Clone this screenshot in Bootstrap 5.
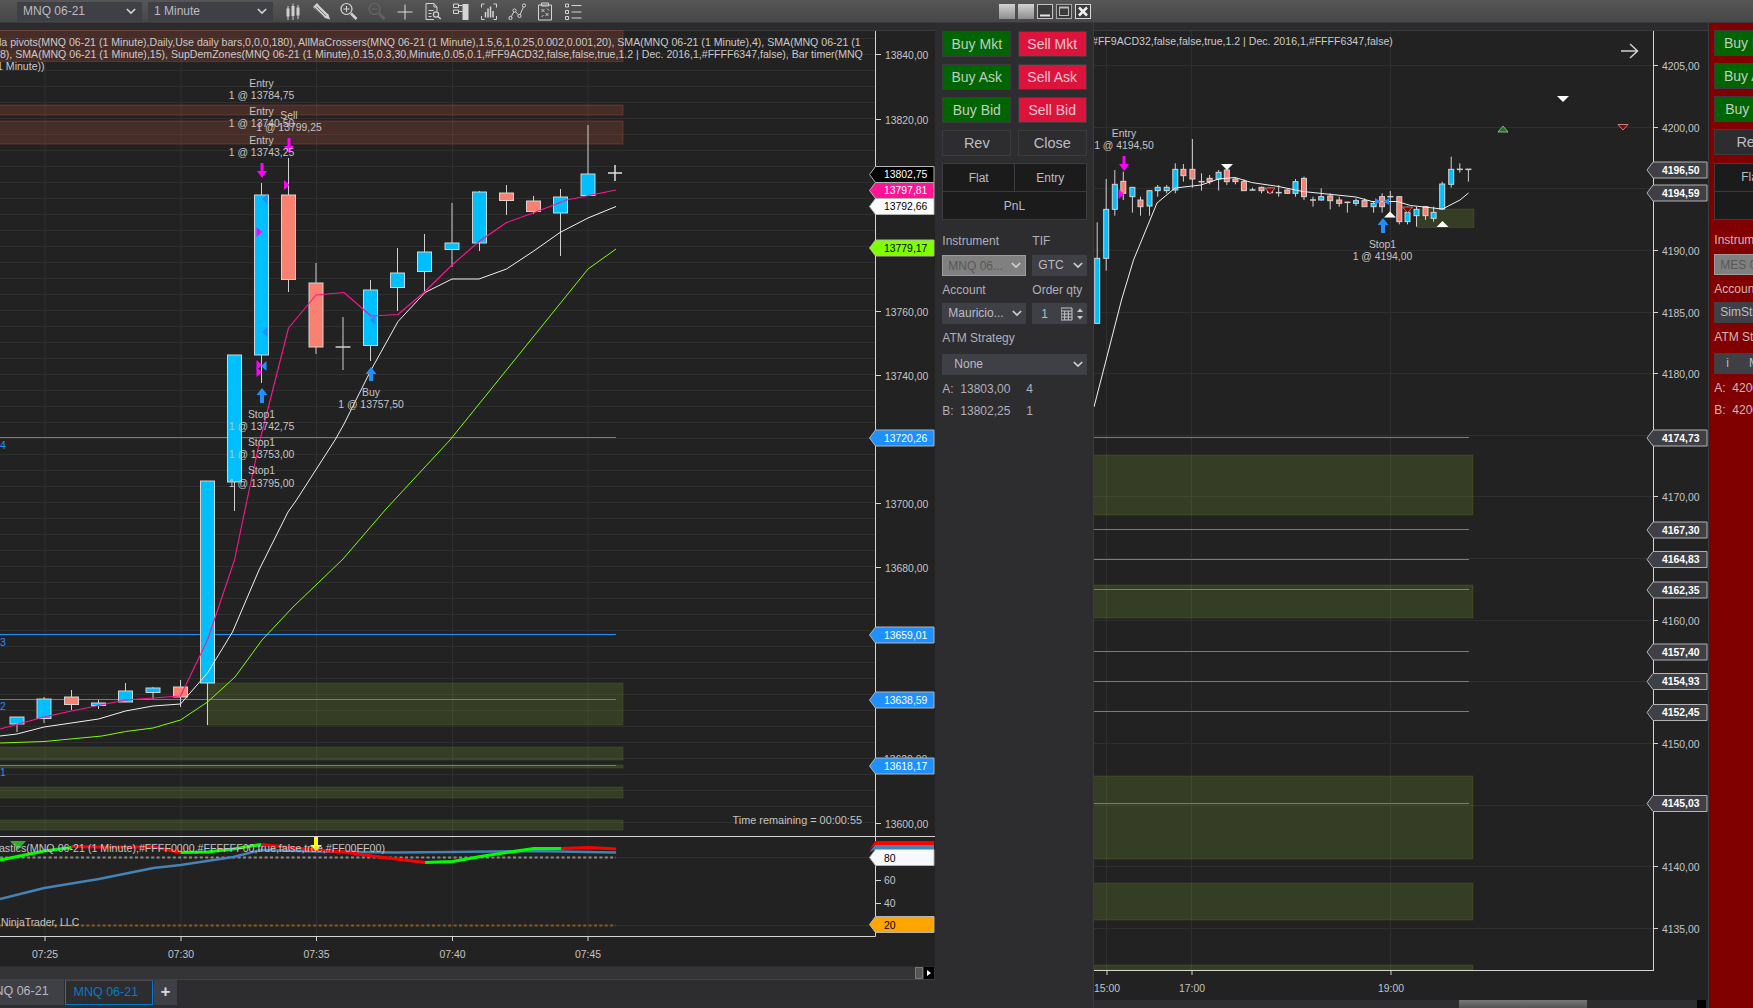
<!DOCTYPE html>
<html lang="en">
<head>
    <meta charset="UTF-8">
    <title>MNQ 06-21 chart</title>
    <link href="https://cdn.jsdelivr.net/npm/bootstrap@5.3.0/dist/css/bootstrap.min.css" rel="stylesheet">
    <style>
        html, body { height: 100%; }
        body {
            background: #2d2d30;
            color: #c0c0c6;
            font-family: "Liberation Sans", Arial, sans-serif;
            font-size: 12px;
            overflow: hidden;
        }
        /* top strip */
        .top-strip { height: 23px; flex: none; background: linear-gradient(#565656, #474747); border-bottom: 1px solid #3a3a3a; }
        .tb-left { width: 1093px; padding-left: 17px; }
        .tb-select.form-select {
            width: 124.5px; height: 19px; min-height: 0; margin-right: 6.5px; padding: 0 20px 0 6px;
            font-size: 12px; line-height: 19px; color: #bcbcc2; background-color: #3f3f46;
            border: 0; border-radius: 0;
            background-image: url("data:image/svg+xml,%3csvg xmlns='http://www.w3.org/2000/svg' viewBox='0 0 12 8'%3e%3cpath fill='none' stroke='%23d0d0d0' stroke-width='2' d='M1 1l5 5 5-5'/%3e%3c/svg%3e");
            background-size: 10px 7px; background-position: right 6px center;
        }
        .tb-icon { width: 28px; height: 22px; display: flex; align-items: center; justify-content: center; flex: none; }
        .tb-icons { margin-left: -.5px; }
        .win-btns { margin-left: auto; gap: 3px; padding-right: 2.5px; }
        .win-btn { width: 16px; height: 15px; display: block; }
        /* chart windows */
        .work-area { height: 985px; }
        .chart-one { width: 935px; flex: none; }
        .chart-two { width: 614px; flex: none; }
        .chart-one svg, .chart-two svg { display: block; }
        .cv text { font-family: "Liberation Sans", Arial, sans-serif; font-size: 10.4px; fill: #c4c4c4; dominant-baseline: central; }
        .cv .tag-t { fill: #fff; font-weight: 700; }
        .cv .legend-t { font-size: 10.58px; fill: #cacaca; }
        .cv .stoch-t { font-size: 10.68px; }
        .cv .remain-t { font-size: 10.9px; }
        .hscroll { background: #343436; border-top: 1px solid #2a2a2c; border-bottom: 1px solid #3f3f46; height: 14px; }
        .hscroll-thumb { width: 8px; height: 12px; background: #555; border: 1px solid #777; }
        .hscroll-end { width: 10px; height: 12px; background: #000; margin: 0 1px 0 1px; color: #fff; }
        .two-scroll { height: 8px; background: #2d2d30; position: relative; }
        .two-thumb { position: absolute; left: 365px; top: 0; width: 128px; height: 8px; background: linear-gradient(#777, #555); }
        .two-end { position: absolute; left: 603px; top: 0; width: 9px; height: 8px; background: #000; }
        /* tabs */
        .tab-row { height: 28px; border: 0; flex-wrap: nowrap; background: #2d2d30; }
        .tab-row .nav-link {
            height: 25px; padding: 0 7.5px; line-height: 23px; font-size: 12.5px; color: #b8b8be; background: #3f3f46;
            border: 0; border-radius: 0; margin: 0; white-space: nowrap;
        }
        .tab-row .tab-cut { margin-left: -24px; width: 88px; margin-right: 1px; padding-left: 8px; }
        .tab-row .nav-link.active { width: 88px; color: #0a78c8; background: #2d2d30; border: 1px solid #007acc; border-top-color: #4a4a50; margin-right: 1px; }
        .tab-row .tab-plus { width: 23px; text-align: center; padding: 0; font-weight: 700; font-size: 17px; color: #d8d8d8; }
        /* order panels */
        .order-wrap { width: 159px; flex: none; border-right: 1px solid #3c3c40; overflow: hidden; }
        .order-wrap.red-wrap { width: 45px; background: #800000; border-right: 0; border-left: 1px solid #3c3c40; }
        .order-panel { width: 158px; padding: 7.7px 6.3px 0 7.3px; }
        .red-wrap .order-panel { padding: 7px 6.3px 0 5.3px; }
        .red-wrap .fld-label, .red-wrap .quote-line { color: #d8b4b4; }
        .order-btns { --bs-gutter-x: 6.5px; --bs-gutter-y: 7px; }
        .order-btn.btn {
            width: 100%; height: 26px; padding: 0; font-size: 14px; line-height: 24px; border-radius: 0;
            color: #c0cec0; border: 1px solid #3c3c40; background: #2d2d30;
        }
        .order-btn.is-buy { background: #006400; }
        .order-btn.is-sell { background: #dc143c; color: #e8c6cc; }
        .order-btn.is-plain { color: #bcbcc2; font-size: 14.5px; }
        .pnl-table.table { width: 100%; table-layout: fixed; margin: 7.7px 0 0; --bs-table-bg: #1b1b1c; --bs-table-color: #bcbcc2; --bs-table-border-color: #3c3c40; }
        .pnl-table td { height: 28px; padding: 0; font-size: 12px; text-align: center; vertical-align: middle; }
        .fld-label { height: 14px; line-height: 14px; margin: 7px 0 6.5px; font-size: 12px; color: #b0b0b8; white-space: nowrap; overflow: visible; }
        .fld-first { margin-top: 13.7px; }
        .fld-atm { margin-bottom: 8.5px; }
        .fld-gap { gap: 6px; }
        .fld-side { width: 55px; flex: none; }
        .fld-main { width: 84px; flex: none; }
        .order-panel .form-select {
            height: 21px; min-height: 0; padding: 0 18px 0 6px; font-size: 12px; line-height: 21px; color: #bcbcc2; background-color: #3f3f46;
            border: 0; border-radius: 0;
            background-image: url("data:image/svg+xml,%3csvg xmlns='http://www.w3.org/2000/svg' viewBox='0 0 12 8'%3e%3cpath fill='none' stroke='%23d0d0d0' stroke-width='2' d='M1 1l5 5 5-5'/%3e%3c/svg%3e");
            background-size: 10px 7px; background-position: right 4px center;
        }
        .order-panel .form-select:disabled { background-color: #808080; color: #585858; border: 1px solid #9c9c9c; padding-left: 5px; opacity: 1; }
        .sel-wide.form-select { padding-left: 12px; }
        .qty-box { height: 21px; background: #3f3f46; padding-left: 9px; color: #bcbcc2; }
        .quote-line { height: 14px; line-height: 14px; margin-top: 8px; color: #b0b0b8; font-size: 12px; }
        .quote-first { margin-top: 7px; }
        .q-key { width: 18px; flex: none; }
        .q-px { width: 66px; flex: none; }
    </style>
</head>
<body class="d-flex flex-column">

<!-- window title strip with instrument, interval and chart tools -->
<div class="top-strip d-flex">
    <div class="tb-left d-flex align-items-center">
        <select class="form-select tb-select"><option>MNQ 06-21</option></select>
        <select class="form-select tb-select"><option>1 Minute</option></select>
        <div class="tb-icons d-flex">
            <div class="tb-icon"><svg width="20" height="20" viewBox="0 0 20 20"><path d="M5 5v14M10 2.500v16.500M15 4v14" stroke="#cfcfcf" fill="none"/><path d="M3.500 7.500h3v8h-3zM8.500 5h3v10h-3zM13.500 6.500h3v8h-3z" fill="#cfcfcf"/></svg></div>
            <div class="tb-icon"><svg width="20" height="20" viewBox="0 0 20 20"><path d="M2 6l4-4 11.500 11.500 1.500 5-5-1.500z" fill="#d0d0d0"/><path d="M5.500 5.500l9.500 9.500M7.500 3.500l9 9M3.500 6.500l9 9" stroke="#555" stroke-width=".8" fill="none"/></svg></div>
            <div class="tb-icon"><svg width="20" height="20" viewBox="0 0 20 20"><circle cx="7.500" cy="8" r="5.500" fill="none" stroke="#d8d8d8" stroke-width="1.200"/><path d="M7.500 5v6M4.500 8h6" stroke="#d8d8d8" fill="none"/><path d="M12 12.500l5.500 5.500" stroke="#cfcfcf" stroke-width="2.600"/></svg></div>
            <div class="tb-icon"><svg width="20" height="20" viewBox="0 0 20 20"><circle cx="7.500" cy="8" r="5.500" fill="none" stroke="#6a6a6a" stroke-width="1.200"/><path d="M4.500 8h6" stroke="#6a6a6a" fill="none"/><path d="M12 12.500l5.500 5.500" stroke="#636363" stroke-width="2.600"/></svg></div>
            <div class="tb-icon"><svg width="20" height="20" viewBox="0 0 20 20"><path d="M2.500 11h15M10 3.500v15" stroke="#dcdcdc" fill="none"/></svg></div>
            <div class="tb-icon"><svg width="20" height="20" viewBox="0 0 20 20"><path d="M3 18.500V2.500h8l3 3.500v4M3 18.500h8M11 2.500v3.500h3M5.500 9.500h5M5.500 12.500h3M5.500 15.500h3" stroke="#d4d4d4" fill="none"/><circle cx="13" cy="13.500" r="2.600" fill="none" stroke="#d4d4d4" stroke-width="1.200"/><path d="M14.800 15.500l3 2.500" stroke="#d4d4d4" stroke-width="1.600"/></svg></div>
            <div class="tb-icon"><svg width="20" height="20" viewBox="0 0 20 20"><path d="M11.500 3h6v16h-6z" fill="#d4d4d4"/><path d="M2.500 3h5v3.500h-5zM2.500 9h5v3.500h-5zM7.500 4.500h4M7.500 10.500h4" stroke="#d4d4d4" fill="none"/></svg></div>
            <div class="tb-icon"><svg width="20" height="20" viewBox="0 0 20 20"><path d="M5.500 3h-3v3.500M14.500 3h3v3.500M5.500 18.500h-3v-3.500M14.500 18.500h3v-3.500" stroke="#d4d4d4" fill="none"/><path d="M6.500 11v5.500M9 7.500v9M11.500 5.500v11M14 10v6.500" stroke="#d4d4d4" stroke-width="1.500" fill="none"/></svg></div>
            <div class="tb-icon"><svg width="20" height="20" viewBox="0 0 20 20"><path d="M3.500 17L7.500 9.500l5 5.500 4.500-10.500" stroke="#d4d4d4" fill="none"/><circle cx="3.500" cy="17" r="1.600" fill="#4c4c4c" stroke="#d4d4d4"/><circle cx="7.500" cy="9.500" r="1.600" fill="#4c4c4c" stroke="#d4d4d4"/><circle cx="12.500" cy="15" r="1.600" fill="#4c4c4c" stroke="#d4d4d4"/><circle cx="17" cy="4.500" r="1.600" fill="#4c4c4c" stroke="#d4d4d4"/></svg></div>
            <div class="tb-icon"><svg width="20" height="20" viewBox="0 0 20 20"><path d="M3.500 4h13v15h-13zM6.500 2h7v3h-7z" stroke="#d4d4d4" fill="none"/><path d="M6.500 8l3 3M9.500 8l-3 3M10.500 12l3 3M13.500 12l-3 3M12 7.500l2 2M6.500 16l2-2" stroke="#d4d4d4" stroke-width=".9" fill="none"/></svg></div>
            <div class="tb-icon"><svg width="20" height="20" viewBox="0 0 20 20"><path d="M2.500 3h3v3h-3zM2.500 9.500h3v3h-3zM2.500 15.500h3v3h-3zM8.500 4.500h10M8.500 11h10M8.500 17h10" stroke="#d4d4d4" fill="none"/></svg></div>
        </div>
        <div class="win-btns d-flex">
            <svg class="win-btn" viewBox="0 0 16 15"><defs><linearGradient id="wg" x1="0" y1="0" x2="0" y2="1"><stop offset="0" stop-color="#d2d2d2"/><stop offset="1" stop-color="#8e8e8e"/></linearGradient></defs><rect width="16" height="15" fill="url(#wg)"/></svg>
            <svg class="win-btn" viewBox="0 0 16 15"><rect width="16" height="15" fill="url(#wg)"/></svg>
            <svg class="win-btn" viewBox="0 0 16 15"><rect x=".5" y=".5" width="15" height="14" fill="#3b3b3b" stroke="#c4c4c4"/><path d="M3 11.500h10" stroke="#e4e4e4" stroke-width="2"/></svg>
            <svg class="win-btn" viewBox="0 0 16 15"><rect x=".5" y=".5" width="15" height="14" fill="#3b3b3b" stroke="#a8a8a8"/><rect x="3.500" y="3.500" width="9" height="8" fill="none" stroke="#bcbcbc"/><path d="M3 3.500h10" stroke="#bcbcbc" stroke-width="2"/></svg>
            <svg class="win-btn" viewBox="0 0 16 15"><rect x=".5" y=".5" width="15" height="14" fill="#3b3b3b" stroke="#d8d8d8"/><path d="M4 3.500l8 8M12 3.500l-8 8" stroke="#eee" stroke-width="2.600"/></svg>
        </div>
    </div>
</div>

<div class="work-area d-flex">
    <!-- left chart: MNQ price pane, stochastics pane, time axis -->
    <section class="chart-one d-flex flex-column">
        <svg id="chartOne" class="cv" width="935" height="943" viewBox="0 23 935 943"></svg>
        <div class="hscroll d-flex justify-content-end align-items-start">
            <div class="hscroll-thumb"></div>
            <div class="hscroll-end d-flex align-items-center justify-content-center"><svg width="4" height="6" viewBox="0 0 4 6"><path d="M0 0l4 3-4 3z" fill="#fff"/></svg></div>
        </div>
        <ul class="nav nav-tabs tab-row">
            <li class="nav-item"><a class="nav-link tab-cut" href="#">MNQ 06-21</a></li>
            <li class="nav-item"><a class="nav-link active" href="#">MNQ 06-21</a></li>
            <li class="nav-item"><a class="nav-link tab-plus" href="#">+</a></li>
        </ul>
    </section>

    <aside class="order-wrap" id="panelOne"></aside>

    <!-- right chart: MES -->
    <section class="chart-two d-flex flex-column">
        <svg id="chartTwo" class="cv" width="614" height="977" viewBox="1094 23 614 977"></svg>
        <div class="two-scroll"><div class="two-thumb"></div><div class="two-end"></div></div>
    </section>

    <aside class="order-wrap red-wrap" id="panelTwo"></aside>
</div>

<script>
    // order entry panel, the red one is only the cut off left edge of a second copy
    function orderPanel(p) {
        return `<div class="order-panel">
            <div class="row row-cols-2 order-btns">
                <div class="col"><button class="btn order-btn is-buy">Buy Mkt</button></div>
                <div class="col"><button class="btn order-btn is-sell">Sell Mkt</button></div>
                <div class="col"><button class="btn order-btn is-buy">Buy Ask</button></div>
                <div class="col"><button class="btn order-btn is-sell">Sell Ask</button></div>
                <div class="col"><button class="btn order-btn is-buy">Buy Bid</button></div>
                <div class="col"><button class="btn order-btn is-sell">Sell Bid</button></div>
                <div class="col"><button class="btn order-btn is-plain">Rev</button></div>
                <div class="col"><button class="btn order-btn is-plain">Close</button></div>
            </div>
            <table class="table table-bordered pnl-table">
                <tr><td>Flat</td><td>Entry</td></tr>
                <tr><td colspan="2">PnL</td></tr>
            </table>
            <div class="d-flex fld-gap fld-first fld-label"><div class="fld-main">Instrument</div><div>TIF</div></div>
            <div class="d-flex fld-gap">
                <select class="form-select fld-main" disabled><option>${p.inst}</option></select>
                <select class="form-select fld-side"><option>GTC</option></select>
            </div>
            <div class="d-flex fld-gap fld-label"><div class="fld-main">Account</div><div>Order qty</div></div>
            <div class="d-flex fld-gap">
                <select class="form-select fld-main"><option>${p.acct}</option></select>
                <div class="qty-box fld-side d-flex align-items-center">
                    <span class="me-auto">1</span>
                    <svg width="26" height="16" viewBox="0 0 26 16"><path d="M0 2h11v12H0zM0 5h11M0 8h11M0 11h11M3.700 5v9M7.300 5v9" stroke="#c8c8c8" fill="none"/><path d="M16 6l3-3.500L22 6zM16 10l3 3.500 3-3.500z" fill="#c8c8c8"/></svg>
                </div>
            </div>
            <div class="fld-label fld-atm">ATM Strategy</div>
            <select class="form-select sel-wide"><option>${p.atm}</option></select>
            <div class="quote-line quote-first d-flex"><span class="q-key">A:</span><span class="q-px">${p.ask}</span><span>4</span></div>
            <div class="quote-line d-flex"><span class="q-key">B:</span><span class="q-px">${p.bid}</span><span>1</span></div>
        </div>`;
    }
    document.getElementById('panelOne').innerHTML = orderPanel({ inst: 'MNQ 06...', acct: 'Mauricio...', atm: 'None', ask: '13803,00', bid: '13802,25' });
    document.getElementById('panelTwo').innerHTML = orderPanel({ inst: 'MES 06...', acct: 'SimStudy...', atm: 'i&nbsp;&nbsp;&nbsp;&nbsp;&nbsp;&nbsp;Mauricio', ask: '4200,00', bid: '4200,00' });

    const BLUE = '#00bfff', SALMON = '#fa8072', MAGENTA = '#ff00ff', DODGER = '#1e90ff';

    const line = (x1, y1, x2, y2, c, w = 1) => `<line x1="${x1}" y1="${y1}" x2="${x2}" y2="${y2}" stroke="${c}" stroke-width="${w}"/>`;
    const dashed = (x1, y, x2, c) => `<line x1="${x1}" y1="${y}" x2="${x2}" y2="${y}" stroke="${c}" stroke-width="2" stroke-dasharray="3 2.400"/>`;
    const rect = (x, y, w, h, f, extra = '') => `<rect x="${x}" y="${y}" width="${w}" height="${h}" fill="${f}" ${extra}/>`;
    const txt = (x, y, s, anchor = 'start', extra = '') => `<text x="${x}" y="${y}" text-anchor="${anchor}" ${extra}>${s}</text>`;
    const poly = (pts, c, w) => `<polyline points="${pts.map(p => p.join(',')).join(' ')}" fill="none" stroke="${c}" stroke-width="${w}" stroke-linejoin="round"/>`;
    const tri = (pts, f, extra = '') => `<polygon points="${pts}" fill="${f}" ${extra}/>`;

    // candle: [x, wick top, body top, body bottom, wick bottom, colour], no colour means doji
    function candle(c, half) {
        const [x, wt, bt, bb, wb, col] = c;
        let s = line(x, wt, x, wb, '#cfcfcf');
        if (col) s += rect(x - half, bt, half * 2, bb - bt, col, 'stroke="#d4d4d4" stroke-width="1"');
        else s += line(x - half - .5, bt, x + half + .5, bt, '#cfcfcf', 1.5);
        return s;
    }

    // block arrows for the executions
    function downArrow(x, y1, y2, c) {
        return rect(x - 1.5, y1, 3, y2 - y1 - 6, c) + tri(`${x - 5},${y2 - 7} ${x + 5},${y2 - 7} ${x},${y2}`, c);
    }
    function upArrow(x, y1, y2, c) {
        return rect(x - 2, y1 + 6, 4, y2 - y1 - 6, c) + tri(`${x - 5.5},${y1 + 7} ${x + 5.5},${y1 + 7} ${x},${y1}`, c);
    }
    const rightTri = (x, y, c) => tri(`${x - 2.5},${y - 5} ${x + 3},${y} ${x - 2.5},${y + 5}`, c);
    const leftTri = (x, y, c) => tri(`${x + 2.5},${y - 5} ${x - 3},${y} ${x + 2.5},${y + 5}`, c);

    // price marker on the axis, pointing left
    function tag(x1, x2, y, fill, h = 8) {
        return tri(`${x1},${y} ${x1 + 6},${y - h} ${x2},${y - h} ${x2},${y + h} ${x1 + 6},${y + h}`, fill, 'stroke="#b4b4b4" stroke-width="1"');
    }

    function buildChartOne() {
        let s = rect(0, 23, 935, 943, '#222222') + rect(0, 23, 935, 7, '#2b2b2d') + line(0, 30.5, 935, 30.5, '#3a3a3c');

        // grid
        for (let y = 38; y < 836; y += 16) s += line(0, y + .5, 875, y + .5, '#2f2f2f');
        s += line(0, 857.5, 875, 857.5, '#2f2f2f') + line(0, 925.5, 875, 925.5, '#2f2f2f');
        [45, 181, 316.5, 452.5, 588].forEach(x => { s += line(x, 31, x, 936, '#2f2f2f'); });

        // zones
        const red = 'fill-opacity=".17" stroke="#ff6347" stroke-opacity=".22"';
        [[-2, 30.5, 625, 31], [-2, 105, 625, 10], [-2, 121, 625, 23]].forEach(z => { s += rect(z[0], z[1], z[2], z[3], '#ff6347', red); });
        const grn = 'fill-opacity=".16" stroke="#9acd32" stroke-opacity=".14"';
        [[207, 683, 416, 42], [-2, 747, 625, 13], [-2, 765, 625, 3], [-2, 787, 625, 11], [-2, 820, 625, 10]].forEach(z => { s += rect(z[0], z[1], z[2], z[3], '#9acd32', grn); });

        // pivots
        [437.5, 634.5, 699.5, 765.5].forEach(y => { s += line(0, y, 616, y, DODGER); });
        const pivotT = 'style="fill:#1e90ff"';
        s += txt(0, 445, '4', 'start', pivotT) + txt(0, 642, '3', 'start', pivotT) + txt(0, 706, '2', 'start', pivotT) + txt(0, 772, '1', 'start', pivotT);

        // candles
        const bars = [
            [17, 717, 717, 724, 732, BLUE], [44, 697, 699, 718.5, 723, BLUE], [71.5, 690, 697, 704.5, 710, SALMON],
            [98.5, 700, 703, 705.5, 709, BLUE], [125.5, 683, 691, 702, 702, BLUE], [153, 687, 688, 692.5, 699, BLUE],
            [180.5, 680, 687, 697, 707, SALMON], [207.5, 481, 481, 683, 725, BLUE], [234.5, 355, 355, 482, 511, BLUE],
            [261.5, 183, 195, 355, 383, BLUE], [288.5, 158, 195, 279.5, 292, SALMON], [316, 263, 283, 347, 354, SALMON],
            [343, 317, 347, 347, 370], [370.5, 280, 290, 345.5, 361, BLUE], [397.5, 248, 273, 287.5, 311, BLUE],
            [424.5, 234, 252, 271.5, 292, BLUE], [452, 203, 243, 249.5, 267, BLUE], [479.5, 191, 192, 243, 251, BLUE],
            [506.5, 185, 193, 200.5, 215, SALMON], [533.5, 196, 201, 211.5, 214, SALMON], [560.5, 189, 197, 213, 256, BLUE],
            [588, 125, 174, 195.5, 195.5, BLUE]
        ];
        bars.forEach(b => { s += candle(b, 7); });
        s += line(608, 173, 622, 173, '#e0e0e0', 1.5) + line(615, 165, 615, 181, '#e0e0e0', 1.5);

        // moving averages
        s += poly([[0, 743], [44, 741.5], [102, 736], [125.5, 731.5], [153, 728], [180.5, 720], [207.5, 702], [235, 677], [262, 640], [293, 607], [343, 559], [386, 509], [450, 440], [588, 269], [616, 249]], '#7fff00', 1);
        s += poly([[0, 736], [17, 734], [44, 727], [98.5, 719], [125.5, 711], [153, 706], [180.5, 704], [207.5, 673], [232.5, 632], [259, 570], [288, 512], [296.5, 500], [335, 440], [344, 424], [371, 370], [398, 321.5], [425, 292.5], [452, 279], [479, 279], [506.5, 269], [533, 251.5], [560, 232.5], [588, 218], [616, 206.5]], '#f0f0f0', 1);
        s += poly([[0, 729], [44, 717], [71.5, 711], [98.5, 705.5], [125.5, 700], [153, 698], [180.5, 696], [207.5, 640], [234.5, 560], [247, 500], [260, 440], [288.5, 328], [316, 295], [344, 292.5], [371, 316], [398, 314.5], [425, 291.5], [452, 265], [479, 241.5], [506.5, 222.5], [533, 213], [566.5, 200], [616, 190]], '#ff1493', 1.1);

        // executions
        s += downArrow(262, 163, 178, MAGENTA) + downArrow(289, 138, 153, MAGENTA);
        s += rightTri(259, 232, MAGENTA) + rightTri(286.5, 185, MAGENTA) + leftTri(265, 199, DODGER) + leftTri(265, 332, DODGER);
        s += rightTri(259, 365, MAGENTA) + rightTri(259, 372, MAGENTA) + leftTri(264, 366, DODGER) + leftTri(373, 320, DODGER);
        s += upArrow(262, 388, 403, DODGER) + upArrow(371, 367, 381, DODGER);

        const labels = [
            [261.5, 83, 'Entry'], [261.5, 95.5, '1 @ 13784,75'], [261.5, 111, 'Entry'], [261.5, 123.5, '1 @ 13740,50'],
            [261.5, 140, 'Entry'], [261.5, 152, '1 @ 13743,25'], [289, 115, 'Sell'], [289, 127, '1 @ 13799,25'],
            [261.5, 414, 'Stop1'], [261.5, 426, '1 @ 13742,75'], [261.5, 442, 'Stop1'], [261.5, 454, '1 @ 13753,00'],
            [261.5, 470, 'Stop1'], [261.5, 483, '1 @ 13795,00'], [371, 392, 'Buy'], [371, 404, '1 @ 13757,50']
        ];
        labels.forEach(l => { s += txt(l[0], l[1], l[2], 'middle'); });

        // legend
        s += txt(-1, 42, 'la pivots(MNQ 06-21 (1 Minute),Daily,Use daily bars,0,0,0,180), AllMaCrossers(MNQ 06-21 (1 Minute),1.5,6,1,0.25,0.002,0.001,20), SMA(MNQ 06-21 (1 Minute),4), SMA(MNQ 06-21 (1', 'start', 'class="legend-t"');
        s += txt(-3, 54, ',8), SMA(MNQ 06-21 (1 Minute),15), SupDemZones(MNQ 06-21 (1 Minute),0.15,0.3,30,Minute,0.05,0.1,#FF9ACD32,false,false,true,1.2 | Dec. 2016,1,#FFFF6347,false), Bar timer(MNQ', 'start', 'class="legend-t"');
        s += txt(-3, 66, '1 Minute))', 'start', 'class="legend-t"');
        s += txt(862, 820, 'Time remaining = 00:00:55', 'end', 'class="remain-t"');

        // stochastics pane
        s += dashed(0, 857.5, 616, '#8c8c8c') + dashed(0, 925.5, 616, '#8a5a16');
        const k = p => p.map(q => [+(q[0] / 2.529).toFixed(1), q[1]]);
        s += poly(k([[0, 899], [112, 888], [250, 879], [388, 868], [457, 865], [590, 857], [660, 850], [800, 851.5], [1000, 852.5], [1145, 852], [1350, 851], [1558, 852.5]]), '#4682b4', 2.4);
        s += poly(k([[0, 860], [112, 851], [181, 847.5]]), '#00ff00', 3);
        s += poly(k([[181, 846.5], [250, 847], [388, 847], [457, 852.5]]), '#ff0000', 3);
        s += poly(k([[457, 852.5], [525, 852], [590, 849], [660, 844.5]]), '#00ff00', 3);
        s += poly(k([[660, 844.5], [800, 850], [870, 852], [950, 856.5], [1075, 862.5]]), '#ff0000', 3);
        s += poly(k([[1075, 862.5], [1145, 861.5], [1215, 856.5], [1350, 848.5], [1420, 848.5]]), '#00ff00', 3);
        s += poly(k([[1420, 848.5], [1490, 847.5], [1558, 849]]), '#ff0000', 3);
        s += tri('10,841 26,841 18,850', '#2fae2f');
        s += rect(314, 837, 4, 8, '#ffff00') + tri('310,845 322,845 316,851', '#ffff00');
        s += txt(-7, 848, 'hastics(MNQ 06-21 (1 Minute),#FFFF0000,#FFFFFF00,true,false,true,#FF00FF00)', 'start', 'class="stoch-t"');
        s += txt(1, 922, 'NinjaTrader, LLC');

        // panes and axes
        s += line(0, 836.5, 935, 836.5, '#d4d4d4') + line(0, 936.5, 875.5, 936.5, '#d4d4d4') + line(875.5, 31, 875.5, 936.5, '#d4d4d4');
        [[54, '13840,00'], [119, '13820,00'], [311, '13760,00'], [375, '13740,00'], [503, '13700,00'], [567, '13680,00'], [823, '13600,00']].forEach(a => {
            s += line(876, a[0] + .5, 881, a[0] + .5, '#d4d4d4') + txt(885, a[0] + 1, a[1]);
        });
        [[880, '60'], [903, '40']].forEach(a => { s += line(876, a[0] + .5, 881, a[0] + .5, '#d4d4d4') + txt(884, a[0], a[1]); });
        s += txt(884, 759, '13620,00');
        [[45, '07:25'], [181, '07:30'], [316.5, '07:35'], [452.5, '07:40'], [588, '07:45']].forEach(a => {
            s += line(a[0], 936, a[0], 941, '#d4d4d4') + txt(a[0], 954, a[1], 'middle');
        });

        // axis markers
        [[174.5, '13802,75', '#000', '#fff'], [190.5, '13797,81', '#ff1493', '#fff'], [206.5, '13792,66', '#fff', '#000'], [248, '13779,17', '#7fff00', '#000'],
         [438, '13720,26', DODGER, '#fff'], [635, '13659,01', DODGER, '#fff'], [700, '13638,59', DODGER, '#fff'], [766, '13618,17', DODGER, '#fff']].forEach(t => {
            s += tag(869.5, 934, t[0], t[2]);
            s += `<text x="884" y="${t[0]}" style="fill:${t[3]}">${t[1]}</text>`;
        });
        s += tri('869.5,850 875,841 934,841 934,845 875,845', '#ff0000') + tri('869.5,852 875,845 934,845 934,849.5 875,849.5', '#4682b4');
        s += tag(869.5, 934, 857.5, '#f8f8ff');
        s += tag(869.5, 934, 924.5, '#ffa500');
        s += `<text x="884" y="858" style="fill:#000">80</text><text x="884" y="925" style="fill:#000">20</text>`;
        return s;
    }

    function buildChartTwo() {
        let s = rect(1094, 23, 614, 977, '#222222') + rect(1094, 23, 614, 7, '#2b2b2d') + line(1094, 30.5, 1708, 30.5, '#3a3a3c');

        for (let i = 0; i < 15; i++) {
            const y = Math.round(65 + 61.64 * i) + .5;
            s += line(1094, y, 1653, y, '#2f2f2f');
        }
        [1106.5, 1191.5, 1390.5].forEach(x => { s += line(x, 31, x, 970, '#2f2f2f'); });

        const grn = 'fill-opacity=".16" stroke="#9acd32" stroke-opacity=".14"';
        [[1417, 209, 57, 18.5], [1092, 455, 381, 60], [1092, 585, 381, 33], [1092, 776, 381, 83], [1092, 883, 381, 37], [1092, 965, 381, 5]].forEach(z => { s += rect(z[0], z[1], z[2], z[3], '#9acd32', grn); });

        [437.5, 529.5, 559.5, 589.5, 651.5, 681.5, 711.5, 803.5].forEach(y => { s += line(1094, y, 1469, y, DODGER); });

        // read off a crop scaled 2.33 across and 3 down
        const B = BLUE, S = SALMON;
        const raw = [
            [40, 667, 775, 970, 970, B], [61, 537, 628, 775, 812, B], [81, 510, 553, 628, 647, B], [101, 515, 544, 580, 600, S],
            [122, 562, 562, 590, 638, B], [141, 590, 600, 620, 647, S], [162, 570, 572, 618, 647, B], [181, 555, 562, 572, 590, B],
            [202, 555, 562, 572, 580, B], [222, 490, 508, 570, 580, B], [241, 492, 508, 527, 545, S], [262, 417, 508, 537, 563, S],
            [283, 520, 545, 545, 572], [302, 525, 535, 545, 553, S], [323, 510, 517, 537, 572, B], [342, 497, 510, 545, 555, S],
            [362, 533, 537, 545, 553, S], [382, 538, 545, 572, 572, S], [402, 563, 570, 570, 572], [423, 560, 562, 572, 580, S],
            [443, 563, 565, 578, 580, S], [463, 555, 578, 578, 590], [483, 568, 570, 580, 582, S], [502, 537, 545, 580, 590, B],
            [522, 530, 535, 590, 600, S], [543, 590, 600, 600, 620], [562, 565, 590, 600, 602, B], [583, 580, 588, 602, 628, S],
            [604, 590, 600, 610, 620, S], [623, 605, 607, 607, 638], [643, 595, 602, 610, 618, B], [663, 595, 602, 620, 620, S],
            [684, 605, 610, 620, 638, B], [704, 580, 590, 620, 638, S], [723, 573, 590, 590, 640], [744, 588, 590, 665, 673, S],
            [763, 620, 637, 665, 673, B], [784, 620, 628, 647, 680, B], [805, 618, 620, 647, 660, S], [824, 620, 637, 655, 665, B],
            [844, 545, 552, 627, 630, B], [865, 470, 508, 553, 563, B], [885, 490, 508, 508, 518], [905, 508, 508, 508, 545]
        ];
        raw.forEach(r => {
            s += candle([+(1080 + r[0] / 2.33).toFixed(1), r[1] / 3, r[2] / 3, r[3] / 3, r[4] / 3, r[5]], 2.5);
        });

        s += poly([[1094, 407], [1121.5, 300], [1133.5, 260], [1157, 203], [1175, 188], [1201, 185], [1218.5, 179], [1235, 177.5], [1251.5, 182.5], [1278.5, 186.5], [1303, 191.5], [1356, 197], [1372, 201.5], [1397.5, 201.5], [1410.5, 205.5], [1442.5, 209], [1460, 200], [1468.5, 193]], '#f0f0f0', 1);

        // markers
        s += downArrow(1124, 156, 171, MAGENTA) + rightTri(1121, 194, MAGENTA) + upArrow(1383, 218, 233, DODGER);
        s += tri('1221,164 1233,164 1227,170', '#fff') + tri('1384,217.5 1396,217.5 1390,211.5', '#fff') + tri('1436.5,227 1448.5,227 1442.5,221', '#fff');
        s += tri('1265,188 1275,188 1270,194', '#8b0000', 'stroke="#c8a0a0" stroke-width=".7"') + tri('1402.5,207 1412.5,207 1407.5,213', '#8b0000', 'stroke="#c8a0a0" stroke-width=".7"');
        s += tri('1375,198 1381,201.5 1375,205', DODGER) + tri('1389,198 1383,201.5 1389,205', DODGER);
        s += tri('1557,96 1569,96 1563,102', '#fff');
        s += tri('1498,132 1508,132 1503,126', '#1f6f1f', 'stroke="#9fd09f" stroke-width=".8"');
        s += tri('1618,124.5 1628,124.5 1623,130', '#8b0000', 'stroke="#d8a0a0" stroke-width=".8"');
        s += `<path d="M1621 51h16M1630 44l7.5 7-7.5 7" fill="none" stroke="#d0d0d0" stroke-width="1.5"/>`;

        s += txt(1124, 133, 'Entry', 'middle') + txt(1124, 145, '1 @ 4194,50', 'middle');
        s += txt(1382.5, 244, 'Stop1', 'middle') + txt(1382.5, 256, '1 @ 4194,00', 'middle');
        s += txt(1092, 41, '#FF9ACD32,false,false,true,1.2 | Dec. 2016,1,#FFFF6347,false)', 'start', 'class="legend-t"');

        // axes
        s += line(1653.5, 31, 1653.5, 971, '#d4d4d4') + line(1094, 970.5, 1653.5, 970.5, '#d4d4d4');
        for (let p = 4205, i = 0; p >= 4135; p -= 5, i++) {
            if (p === 4195 || p === 4175 || p === 4165 || p === 4155 || p === 4145) continue;
            const y = Math.round(65 + 61.64 * i);
            s += line(1654, y + .5, 1658, y + .5, '#d4d4d4') + txt(1662, y + 1, p + ',00');
        }
        [[1107, '15:00'], [1192, '17:00'], [1391, '19:00']].forEach(a => {
            s += line(a[0], 970, a[0], 975, '#d4d4d4') + txt(a[0], 988, a[1], 'middle');
        });

        [[170, '4196,50'], [193, '4194,59'], [438, '4174,73'], [530, '4167,30'], [559.5, '4164,83'], [590, '4162,35'], [652, '4157,40'], [681.5, '4154,93'], [712.5, '4152,45'], [803.5, '4145,03']].forEach(t => {
            s += tag(1647, 1707, t[0], '#3f3f46');
            s += txt(1662, t[0], t[1], 'start', 'class="tag-t"');
        });
        return s;
    }

    document.getElementById('chartOne').innerHTML = buildChartOne();
    document.getElementById('chartTwo').innerHTML = buildChartTwo();
</script>
<script src="https://cdn.jsdelivr.net/npm/bootstrap@5.3.0/dist/js/bootstrap.bundle.min.js"></script>
</body>
</html>
